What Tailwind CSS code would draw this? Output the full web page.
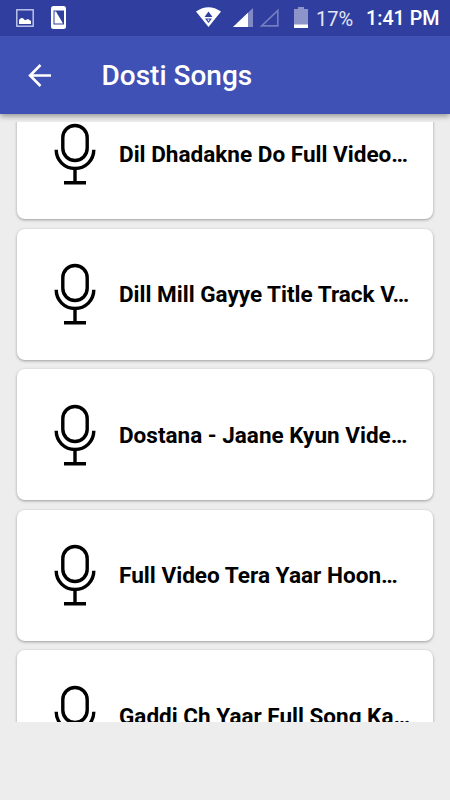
<!DOCTYPE html>
<html lang="en">
<head>
<meta charset="utf-8">
<title>Dosti Songs</title>
<script src="https://cdn.jsdelivr.net/npm/@tailwindcss/browser@4"></script>
</head>
<body class="bg-[#ededed] font-['Roboto',sans-serif]">
<svg class="hidden">
  <symbol id="mic" viewBox="0 0 42 62">
    <g fill="none" stroke="#000" stroke-width="3.4">
      <rect x="8.8" y="2.500" width="24.4" height="35" rx="12.2"/>
      <path d="M2.200 26.800C2.200 37.300 10.500 45.500 21 45.500S39.800 37.300 39.800 26.800"/>
      <path d="M21 45V59M10 59.700H32"/>
    </g>
  </symbol>
</svg>
<div class="w-[450px] h-[800px] overflow-hidden flex flex-col">
  <div class="relative z-10 shrink-0 shadow-[0_2px_6px_rgba(0,0,0,0.4)]">
    <div class="h-9 bg-[#303f9f] flex items-center text-white">
      <svg class="ml-4 w-[18px] h-[18px]" viewBox="0 0 18 18"><rect x=".8" y=".8" width="16.4" height="16.4" fill="none" stroke="#c5caea" stroke-width="1.4"/><path d="M3 15v-4l2-2 2 .3 2 2 3-1.3 3 2v3z" fill="#fff"/></svg>
      <svg class="ml-[17px] mb-0.5 w-[15px] h-[23px]" viewBox="0 0 15 23"><rect width="15" height="23" rx="2.5" fill="#fff"/><path d="M2.500 4.500H13v14H2.500z" fill="#303f9f"/><path d="M3.500 5.500h1.500l7 12H3.500z" fill="#fff"/></svg>
      <svg class="ml-[130px] mb-0.5 w-[25px] h-5" viewBox="0 0 25 20"><path d="M0 4.500Q12.500-4 25 4.500L12.500 20z" fill="#fff"/><path d="M12.500 4.500l4 5.500h-8zM9 11.500h7l-3.500 4.500z" fill="#303f9f"/><path d="M11.300 12.500h2.400l-1.200 1.700z" fill="#fff"/></svg>
      <svg class="ml-3 mb-0.5 w-5 h-[19px]" viewBox="0 0 20 19"><path d="M20 0v19H0z" fill="#8189c5"/><path d="M15 4.750V19H0z" fill="#fff"/></svg>
      <svg class="ml-1.5 mb-0.5 w-5 h-[19px]" viewBox="0 0 20 19"><path d="M18.800 2.500v15.300H2.700z" fill="none" stroke="#737dc0" stroke-width="1.700"/></svg>
      <svg class="ml-[15px] mb-0.5 w-[14px] h-[21px]" viewBox="0 0 14 21"><path d="M0 2h4V0h6v2h4v16H0z" fill="#8c94ca"/><path d="M0 17.500h14V21H0z" fill="#fff"/></svg>
      <span class="absolute left-[316px] top-[6px] text-[20px] leading-[26px] text-[#e4e6f4]">17%</span>
      <span class="absolute left-[366px] top-[6px] text-[19.700px] leading-[26px] font-medium whitespace-nowrap">1:41 PM</span>
    </div>
    <div class="h-[78px] bg-[#3f51b5] flex items-center">
      <svg class="ml-7 mb-px w-6 h-6" viewBox="0 0 24 24" fill="none" stroke="#fff" stroke-width="2.500"><path d="M23 12.500H3M12.500 2L2 12.500 12.500 23"/></svg>
      <h1 class="ml-[49.500px] pt-0.5 text-[28px] leading-8 font-medium text-white whitespace-nowrap">Dosti Songs</h1>
    </div>
  </div>
  <main class="mt-2 h-[600px] shrink-0 overflow-hidden">
    <ul class="-mt-[34px] px-[17px] flex flex-col gap-[9.600px]">
      <li class="h-[131px] shrink-0 rounded-[8px] bg-white shadow-[0_1px_3px_rgba(0,0,0,0.35)] flex items-center pl-[37px]"><svg class="w-[42px] h-[62px]"><use href="#mic"/></svg><span class="ml-[23px] pt-[2px] text-[22.550px] font-bold text-black whitespace-nowrap">Dil Dhadakne Do Full Video…</span></li>
      <li class="h-[131px] shrink-0 rounded-[8px] bg-white shadow-[0_1px_3px_rgba(0,0,0,0.35)] flex items-center pl-[37px]"><svg class="w-[42px] h-[62px]"><use href="#mic"/></svg><span class="ml-[23px] pt-[2px] text-[22.500px] font-bold text-black whitespace-nowrap">Dill Mill Gayye Title Track V…</span></li>
      <li class="h-[131px] shrink-0 rounded-[8px] bg-white shadow-[0_1px_3px_rgba(0,0,0,0.35)] flex items-center pl-[37px]"><svg class="w-[42px] h-[62px]"><use href="#mic"/></svg><span class="ml-[23px] pt-[2px] text-[22.500px] font-bold text-black whitespace-nowrap">Dostana - Jaane Kyun Vide…</span></li>
      <li class="h-[131px] shrink-0 rounded-[8px] bg-white shadow-[0_1px_3px_rgba(0,0,0,0.35)] flex items-center pl-[37px]"><svg class="w-[42px] h-[62px]"><use href="#mic"/></svg><span class="ml-[23px] pt-[2px] text-[22.600px] font-bold text-black whitespace-nowrap">Full Video Tera Yaar Hoon…</span></li>
      <li class="h-[131px] shrink-0 rounded-[8px] bg-white shadow-[0_1px_3px_rgba(0,0,0,0.35)] flex items-center pl-[37px]"><svg class="w-[42px] h-[62px]"><use href="#mic"/></svg><span class="ml-[23px] pt-px text-[22.500px] font-bold text-black whitespace-nowrap">Gaddi Ch Yaar Full Song Ka…</span></li>
    </ul>
  </main>
</div>
</body>
</html>
